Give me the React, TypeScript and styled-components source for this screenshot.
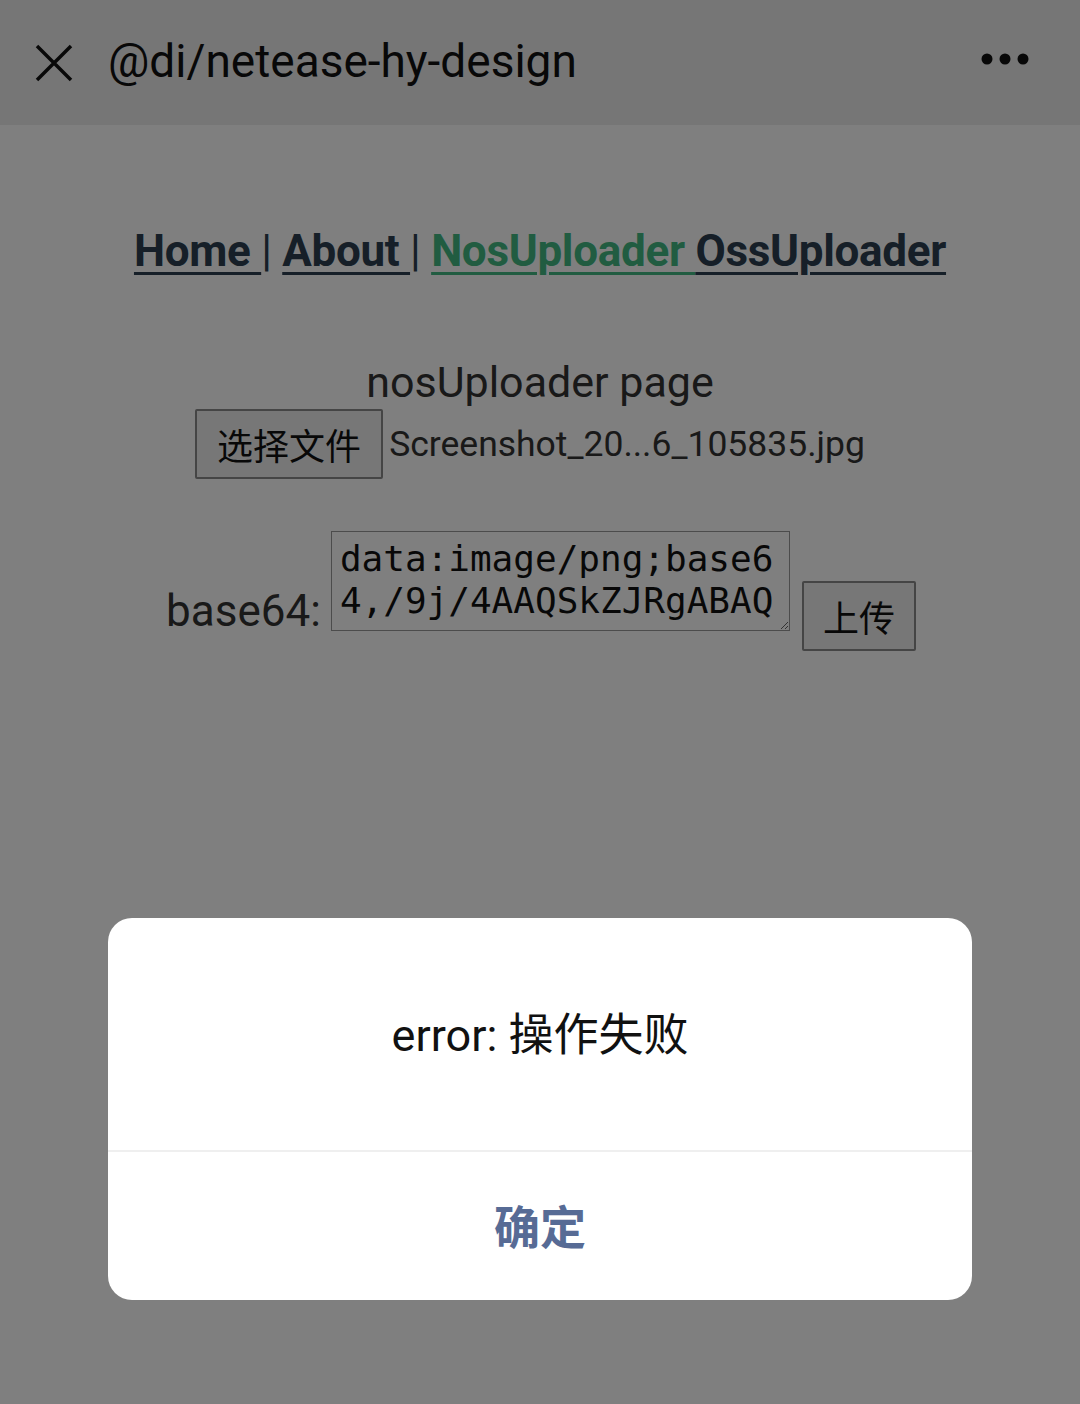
import styled, {createGlobalStyle} from 'styled-components';

const GlobalStyle = createGlobalStyle`
    html, body {
        margin: 0;
        padding: 0;
        background: #ffffff;
    }
    body {
        font-family: Roboto, "Noto Sans CJK SC", sans-serif;
    }
`;

const Page = styled.div`
    position: relative;
    width: 1080px;
    height: 1404px;
    overflow: hidden;
    display: flex;
    flex-direction: column;
    background: #ffffff;
`;
const TopBar = styled.div`
    height: 125px;
    flex-shrink: 0;
    display: flex;
    align-items: center;
    padding: 0 50px 0 34px;
    background: #ededed;
    color: #111;
`;
const Title = styled.div`
    flex: 1;
    margin-left: 34px;
    margin-top: -4px;
    font-size: 46px;
    font-family: Roboto, "Noto Sans CJK SC", sans-serif;
`;
const Dots = styled.div`
    margin-top: -8px;
    display: flex;
`;
const Nav = styled.nav`
    margin-top: 100px;
    text-align: center;
    font-size: 44px;
    font-weight: 700;
    color: #2c3e50;
    letter-spacing: -0.3px;
`;
const NavLink = styled.a<{active?: boolean}>`
    color: ${(p) => (p.active ? '#42b983' : '#2c3e50')};
    text-decoration: underline;
    text-underline-offset: 6px;
    text-decoration-thickness: 3px;
`;
const Sep = styled.span`
    font-weight: 400;
`;
const Content = styled.div`
    margin-top: 79px;
    display: flex;
    flex-direction: column;
    align-items: center;
    color: #2c3e50;
`;
const PageTitle = styled.div`
    font-size: 43px;
    line-height: 53px;
    color: #333;
`;
const FileRow = styled.div`
    display: flex;
    align-items: center;
    margin-left: -20px;
    font-size: 35.5px;
    color: #333;
`;
const NativeButton = styled.button`
    font-family: Roboto, "Noto Sans CJK SC", sans-serif;
    font-size: 36px;
    color: #111;
    background: #efefef;
    border: 2px solid #8a8a8a;
    border-radius: 2px;
    padding: 0 20px;
    height: 70px;
`;
const FileName = styled.span`
    margin-left: 6px;
`;
const Base64Row = styled.div`
    display: flex;
    align-items: flex-end;
    margin-top: 52px;
    margin-left: 2px;
`;
const Label = styled.span`
    font-size: 44px;
    color: #333;
    margin-right: 10px;
    margin-bottom: -6px;
`;
const Area = styled.textarea`
    box-sizing: border-box;
    width: 459px;
    height: 100px;
    padding: 6px 8px 0;
    border: 1px solid #999;
    font-family: "DejaVu Sans Mono", monospace;
    font-size: 36px;
    line-height: 42px;
    color: #111;
    resize: both;
    overflow: hidden;
    word-break: break-all;
    background: #fff;
`;
const UploadButton = styled(NativeButton)`
    margin-left: 12px;
    margin-bottom: -20px;
    width: 114px;
    padding: 0;
`;
const Mask = styled.div`
    position: absolute;
    inset: 0;
    background: rgba(0, 0, 0, 0.5);
    display: flex;
    flex-direction: column;
    justify-content: flex-end;
    align-items: center;
    padding-bottom: 104px;
`;
const Dialog = styled.div`
    width: 864px;
    background: #fff;
    border-radius: 24px;
    overflow: hidden;
`;
const DialogBody = styled.div`
    height: 234px;
    display: flex;
    align-items: center;
    justify-content: center;
    font-size: 45px;
    color: #111;
    padding-bottom: 6px;
    box-sizing: border-box;
    border-bottom: 2px solid #efefef;
`;
const DialogButton = styled.div`
    height: 148px;
    display: flex;
    align-items: center;
    justify-content: center;
    font-size: 46px;
    font-weight: 700;
    color: #576b95;
    padding-bottom: 4px;
    box-sizing: border-box;
`;

const CloseIcon = () => (
    <svg width="40" height="40" viewBox="0 0 40 40">
        <path d="M3 3 L37 37 M37 3 L3 37" stroke="#111" strokeWidth="3.5" fill="none" />
    </svg>
);
const MoreIcon = () => (
    <svg width="50" height="14" viewBox="0 0 50 14">
        <circle cx="7" cy="7" r="5.5" fill="#111" />
        <circle cx="25" cy="7" r="5.5" fill="#111" />
        <circle cx="43" cy="7" r="5.5" fill="#111" />
    </svg>
);

function App() {
    return (
        <Page>
            <GlobalStyle />
            <TopBar>
                <CloseIcon />
                <Title>@di/netease-hy-design</Title>
                <Dots>
                    <MoreIcon />
                </Dots>
            </TopBar>
            <Nav>
                <NavLink>Home </NavLink>
                <Sep>| </Sep>
                <NavLink>About </NavLink>
                <Sep>| </Sep>
                <NavLink active>NosUploader </NavLink>
                <NavLink>OssUploader</NavLink>
            </Nav>
            <Content>
                <PageTitle>nosUploader page</PageTitle>
                <FileRow>
                    <NativeButton>选择文件</NativeButton>
                    <FileName>Screenshot_20...6_105835.jpg</FileName>
                </FileRow>
                <Base64Row>
                    <Label>base64:</Label>
                    <Area readOnly defaultValue="data:image/png;base64,/9j/4AAQSkZJRgABAQ" />
                    <UploadButton>上传</UploadButton>
                </Base64Row>
            </Content>
            <Mask>
                <Dialog>
                    <DialogBody>error: 操作失败</DialogBody>
                    <DialogButton>确定</DialogButton>
                </Dialog>
            </Mask>
        </Page>
    );
}

export default App;
